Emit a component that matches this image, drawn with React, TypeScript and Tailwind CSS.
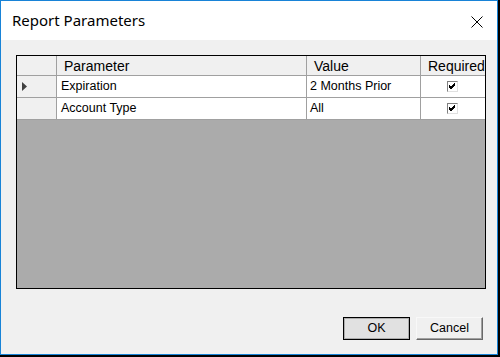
import React from 'react';

const rows = [
  { name: 'Expiration', value: '2 Months Prior', current: true },
  { name: 'Account Type', value: 'All', current: false },
];

function CheckBox() {
  return (
    <div className="flex h-[11px] w-[11px] items-center justify-center border border-t-[#808080] border-l-[#808080] border-r-[#e0e0e0] border-b-[#e0e0e0] bg-white">
      <svg width="9" height="9" viewBox="0 0 9 9">
        <path d="M1 4 L3 6 L7 2 M1 5 L3 7 L7 3 M1 3 L3 5 L7 1" stroke="#000" strokeWidth="1" fill="none" shapeRendering="crispEdges" />
      </svg>
    </div>
  );
}

export default function App() {
  return (
    <div className="h-[357px] w-[500px] bg-black" style={{ fontFamily: '"Liberation Sans", Arial, sans-serif' }}>
      <div className="flex h-[355px] w-[498px] flex-col border border-[#1883d7] bg-[#f0f0f0]">
        {/* Title bar */}
        <div className="flex h-[39px] shrink-0 items-center justify-between bg-white pl-[11px] pr-[14px]">
          <span className="text-[15px] text-black" style={{ fontFamily: '"Noto Sans", "Open Sans", sans-serif' }}>
            Report Parameters
          </span>
          <svg width="12" height="12" viewBox="0 0 12 12" className="mt-[2px]">
            <path d="M0.5 0.5 L11.5 11.5 M11.5 0.5 L0.5 11.5" stroke="#000" strokeWidth="1" />
          </svg>
        </div>

        {/* Body */}
        <div className="flex flex-1 flex-col pl-[15px] pr-[11px] pt-[15px]">
          <div className="flex h-[234px] w-[470px] flex-col border border-black bg-[#ababab]">
            <div className="grid grid-cols-[40px_250px_114px_1fr] text-[14px] leading-none">
              <div className="h-[20px] border-b border-r border-[#a0a0a0] bg-[#f0f0f0]" />
              <div className="flex h-[20px] items-center border-b border-r border-[#a0a0a0] bg-[#f0f0f0] pl-[7px]">Parameter</div>
              <div className="flex h-[20px] items-center border-b border-r border-[#a0a0a0] bg-[#f0f0f0] pl-[7px]">Value</div>
              <div className="flex h-[20px] items-center overflow-hidden whitespace-nowrap border-b border-[#a0a0a0] bg-[#f0f0f0] pl-[7px]">Required</div>
            </div>
            {rows.map((r) => (
              <div key={r.name} className="grid grid-cols-[40px_250px_114px_1fr] text-[12.5px] leading-none">
                <div className="flex h-[22px] items-center border-b border-r border-[#a0a0a0] bg-[#f0f0f0] pl-[5px]">
                  {r.current && (
                    <svg width="5" height="9" viewBox="0 0 5 9">
                      <path d="M0 0 L5 4.5 L0 9 Z" fill="#404040" />
                    </svg>
                  )}
                </div>
                <div className="flex h-[22px] items-center border-b border-r border-[#a0a0a0] bg-white pl-[4px]">{r.name}</div>
                <div className="flex h-[22px] items-center border-b border-r border-[#a0a0a0] bg-white pl-[3px]">{r.value}</div>
                <div className="flex h-[22px] items-center justify-center border-b border-[#a0a0a0] bg-white pr-[2px]">
                  <CheckBox />
                </div>
              </div>
            ))}
          </div>

          <div className="mt-[28px] flex justify-end gap-[6px] pr-[3px] text-[12.5px]">
            <button className="flex h-[23px] w-[67px] items-center justify-center border border-black bg-[#e1e1e1] shadow-[inset_0_0_0_1px_#adadad]">
              OK
            </button>
            <button className="flex h-[23px] w-[67px] items-center justify-center border border-t-[#f8f8f8] border-l-[#f8f8f8] border-r-[#696969] border-b-[#696969] bg-[#f0f0f0] shadow-[inset_-1px_-1px_0_#a0a0a0]">
              Cancel
            </button>
          </div>
        </div>
      </div>
    </div>
  );
}
